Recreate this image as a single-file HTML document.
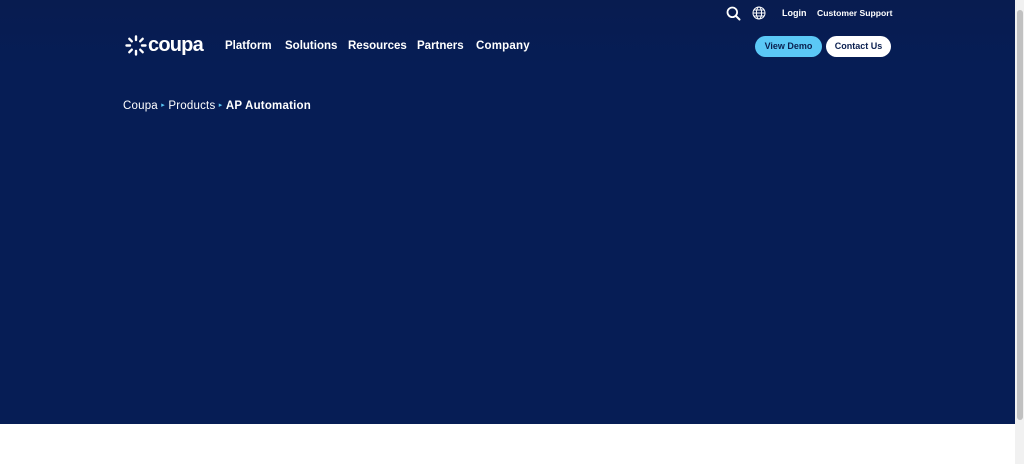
<!DOCTYPE html>
<html><head><style>
html,body{margin:0;padding:0;width:1024px;height:464px;overflow:hidden;background:#fff;font-family:"Liberation Sans",Arial,sans-serif}
.hero{position:absolute;left:0;top:0;width:1015px;height:424px;background:#061d55}
.hdr{position:absolute;left:0;top:0;width:1015px;height:66px;background:linear-gradient(#081c50,#061d55)}
.t{position:absolute;color:#fff;font-weight:bold;white-space:nowrap}
.sb{position:absolute;left:1015px;top:0;width:9px;height:464px;background:#f1f1f1}
.thumb{position:absolute;left:1017px;top:10px;width:6px;height:410px;background:#c1c1c1;border-radius:3px}
.btn{position:absolute;top:36px;height:21px;border-radius:11px;font-size:9px;font-weight:bold;color:#0a1f4f;text-align:center;line-height:21px}
</style></head><body>
<div class="hero"></div><div class="hdr"></div>
<svg style="position:absolute;left:125px;top:35px" width="22" height="21" viewBox="0 0 22 21">
<g stroke="#fff" stroke-width="2.4" stroke-linecap="round">
<line x1="11" y1="1.5" x2="11" y2="5"/><line x1="11" y1="16" x2="11" y2="19.5"/>
<line x1="1.5" y1="10.5" x2="5" y2="10.5"/><line x1="17" y1="10.5" x2="20.5" y2="10.5"/>
<line x1="4.3" y1="3.8" x2="6.8" y2="6.3"/><line x1="15.2" y1="14.7" x2="17.7" y2="17.2"/>
<line x1="17.7" y1="3.8" x2="15.2" y2="6.3"/><line x1="4.3" y1="17.2" x2="6.8" y2="14.7"/>
</g></svg>
<div class="t" style="left:148px;top:34px;font-size:20px;font-weight:bold;letter-spacing:-0.8px">coupa</div>
<div class="t" style="left:225px;top:40px;font-size:11.5px">Platform</div>
<div class="t" style="left:285px;top:40px;font-size:11.5px">Solutions</div>
<div class="t" style="left:348px;top:40px;font-size:11.5px">Resources</div>
<div class="t" style="left:417px;top:40px;font-size:11.5px">Partners</div>
<div class="t" style="left:476px;top:40px;font-size:11.5px;letter-spacing:0.2px">Company</div>
<svg style="position:absolute;left:726px;top:6px" width="15" height="15" viewBox="0 0 15 15"><circle cx="6.3" cy="6.3" r="4.8" stroke="#fff" stroke-width="1.8" fill="none"/><line x1="9.8" y1="9.8" x2="13.5" y2="13.5" stroke="#fff" stroke-width="2" stroke-linecap="round"/></svg>
<svg style="position:absolute;left:752px;top:6px" width="14" height="14" viewBox="0 0 14 14" fill="none" stroke="#fff" stroke-width="1"><circle cx="7" cy="7" r="6"/><ellipse cx="7" cy="7" rx="2.6" ry="6"/><line x1="1" y1="7" x2="13" y2="7"/><line x1="2" y1="4" x2="12" y2="4"/><line x1="2" y1="10" x2="12" y2="10"/></svg>
<div class="t" style="left:782px;top:8px;font-size:9px">Login</div>
<div class="t" style="left:817px;top:8px;font-size:8.6px">Customer Support</div>
<div class="btn" style="left:755px;width:67px;background:#5bc8f6">View Demo</div>
<div class="btn" style="left:826px;width:65px;background:#fff">Contact Us</div>
<div class="t" style="left:123px;top:100px;font-size:11.5px;font-weight:normal;letter-spacing:0.2px">Coupa&nbsp;<span style="color:#5bc8f6;font-size:7px;vertical-align:2px">▸</span>&nbsp;Products&nbsp;<span style="color:#5bc8f6;font-size:7px;vertical-align:2px">▸</span>&nbsp;<b>AP Automation</b></div>
<div class="sb"></div><div class="thumb"></div>
</body></html>
